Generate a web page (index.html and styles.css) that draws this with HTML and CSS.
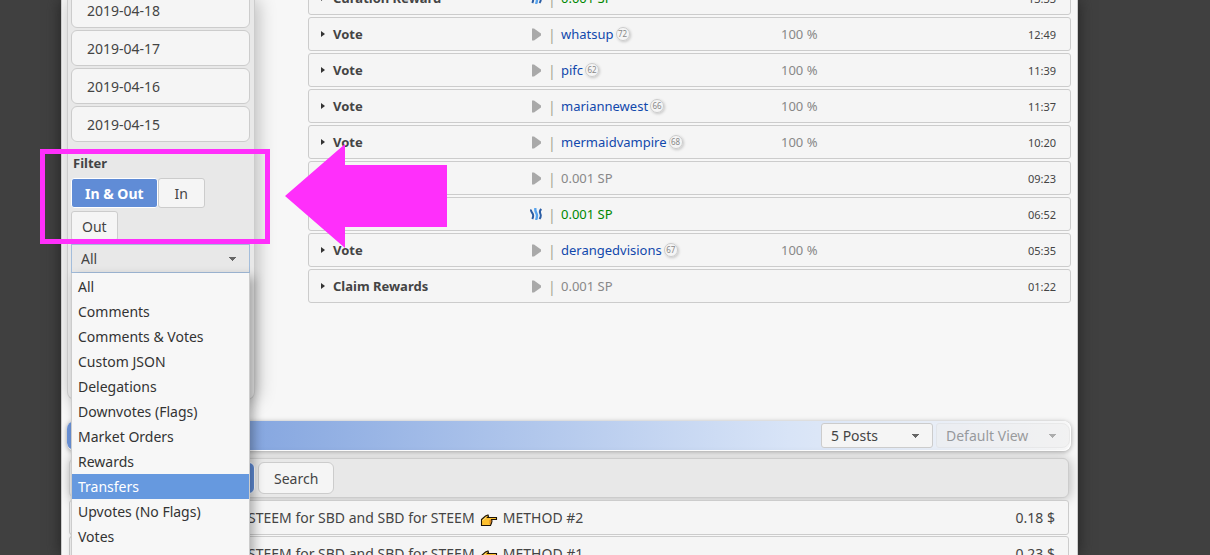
FILE: index.html
```html
<!DOCTYPE html>
<html lang="en">
<head>
    <meta charset="UTF-8">
    <meta name="viewport" content="width=device-width, initial-scale=1.0">
    <title>Account history</title>
    <link rel="stylesheet" href="styles.css">
</head>
<body>
    <svg class="symbols" aria-hidden="true">
        <symbol id="play" viewBox="0 0 10 13">
            <path d="M1 0.5h2l7 5v2l-7 5H1z" fill="#a9a9a9"/>
        </symbol>
        <symbol id="steem" viewBox="0 0 12 12">
            <path d="M1 1.5C.5 4 3.2 5 3.2 7.5 3.2 9 2.8 10 2.3 11" fill="none" stroke="#2b5da4" stroke-width="2"/>
            <path d="M5.5 0C4.500 3.5 7 5 7 7.5 7 9.5 6.5 11 6 12" fill="none" stroke="#56a3ee" stroke-width="2.4"/>
            <path d="M11.300 1C8 4 10.800 5 10.800 7.5 10.800 9 10.300 10 9.500 11" fill="none" stroke="#2b5da4" stroke-width="2"/>
        </symbol>
        <symbol id="hand" viewBox="0 0 18 13">
            <path d="M1.5 5.5 5.5 2 8 1 8.5 2.3 7.5 3.5H16.5V5.5H11.5L12 7 11.5 9 10.5 11.5H1.5z" fill="#fdc02f" stroke="#1d1408" stroke-width="1.1"/>
            <path d="M9.5 7h2M9.5 9h1.5" stroke="#a33b12" stroke-width="0.8"/>
            <path d="M2.5 6.5 6 3.5" stroke="#ffe68a"/>
        </symbol>
    </svg>

    <main class="page">
        <div class="history">
            <aside class="sidebar">
                <div class="dates">
                    <button type="button">2019-04-18</button>
                    <button type="button">2019-04-17</button>
                    <button type="button">2019-04-16</button>
                    <button type="button">2019-04-15</button>
                </div>
                <h2 class="filter-title">Filter</h2>
                <div class="directions">
                    <button type="button" class="active">In &amp; Out</button>
                    <button type="button">In</button>
                    <button type="button">Out</button>
                </div>
                <div class="type-filter">
                    <select class="type-select select" aria-label="Transaction type">
                        <option>All</option>
                    </select>
                    <ul class="type-menu" role="listbox" aria-label="Transaction types">
                        <li role="option">All</li>
                        <li role="option">Comments</li>
                        <li role="option">Comments &amp; Votes</li>
                        <li role="option">Custom JSON</li>
                        <li role="option">Delegations</li>
                        <li role="option">Downvotes (Flags)</li>
                        <li role="option">Market Orders</li>
                        <li role="option">Rewards</li>
                        <li role="option" class="selected" aria-selected="true">Transfers</li>
                        <li role="option">Upvotes (No Flags)</li>
                        <li role="option">Votes</li>
                    </ul>
                </div>
            </aside>

            <section class="transactions" id="transactions"></section>
        </div>

        <section class="posts">
            <div class="posts-header">
                <select class="select count" aria-label="Number of posts"><option>5 Posts</option></select>
                <select class="select view" aria-label="View" disabled><option>Default View</option></select>
            </div>
            <div class="toolbar">
                <button type="button" class="active" aria-label="Posts"></button>
                <button type="button">Search</button>
            </div>
            <article class="post">
                <span>STEEM for SBD and SBD for STEEM <svg class="hand"><use href="#hand"/></svg> METHOD #2</span>
                <span>0.18 $</span>
            </article>
            <article class="post">
                <span>STEEM for SBD and SBD for STEEM <svg class="hand"><use href="#hand"/></svg> METHOD #1</span>
                <span>0.23 $</span>
            </article>
        </section>
    </main>

    <!-- highlight of the filter box -->
    <div class="highlight"></div>
    <svg class="pointer" viewBox="0 0 162 104" aria-hidden="true">
        <path d="M0 52 60 0V21H162V83H60V104z" fill="#ff2ffb"/>
    </svg>

    <script src="script.js"></script>
</body>
</html>
```
FILE: script.js
```js
const transactions = [
    { type: 'Curation Reward', icon: 'steem', reward: '0.001 SP', time: '13:33' },
    { type: 'Vote', user: 'whatsup', rep: 72, weight: '100 %', time: '12:49' },
    { type: 'Vote', user: 'pifc', rep: 62, weight: '100 %', time: '11:39' },
    { type: 'Vote', user: 'mariannewest', rep: 66, weight: '100 %', time: '11:37' },
    { type: 'Vote', user: 'mermaidvampire', rep: 68, weight: '100 %', time: '10:20' },
    { type: '', amount: '0.001 SP', time: '09:23' },
    { type: '', icon: 'steem', reward: '0.001 SP', time: '06:52' },
    { type: 'Vote', user: 'derangedvisions', rep: 67, weight: '100 %', time: '05:35' },
    { type: 'Claim Rewards', amount: '0.001 SP', time: '01:22' }
];

function detail(t) {
    if (t.user) {
        return `<a href="#">${t.user}</a><span class="rep">${t.rep}</span>`;
    }
    return t.reward ? `<span class="reward">${t.reward}</span>` : t.amount;
}

document.getElementById('transactions').innerHTML = transactions.map(t => `
    <div class="transaction">
        <span class="caret"></span>
        <span class="type">${t.type}</span>
        <svg class="icon ${t.icon || 'play'}"><use href="#${t.icon || 'play'}"/></svg>
        <span class="bar">|</span>
        <span class="detail">${detail(t)}</span>
        <span class="weight">${t.weight || ''}</span>
        <time>${t.time}</time>
    </div>`).join('');
```
FILE: styles.css
```css
* {
    box-sizing: border-box;
}

body {
    height: 100vh;
    margin: 0;
    overflow: hidden;
    position: relative;
    background-color: #404040;
    color: #444;
    font-family: "Noto Sans", sans-serif;
    font-size: 14px;
}

button,
select {
    font-family: inherit;
    font-size: 14px;
    color: #444;
    border: 1px solid #ccc;
    background-color: #f5f5f5;
    cursor: pointer;
}

.symbols {
    display: none;
}

.page {
    height: 100%;
    margin: 0 132px 0 61px;
    padding: 0 6px 0 5px;
    overflow: hidden;
    background-color: #f7f7f7;
    border: 1px solid #ccc;
    border-width: 0 1px;
    box-shadow: 0 0 14px #222;
}

.history {
    display: flex;
    align-items: flex-start;
    gap: 53px;
    height: 421px;
}

/* sidebar */

.sidebar {
    flex: 0 0 188px;
    height: 400px;
    padding: 0 4px 0 3px;
    background-color: #e8e8e8;
    border: 1px solid #ccc;
    border-top: 0;
    border-radius: 0 0 8px 8px;
    box-shadow: 3px 0 18px rgba(0, 0, 0, 0.25);
}

.dates {
    display: flex;
    flex-direction: column;
    gap: 2px;
    margin-top: -8px;
}

.dates button {
    height: 36px;
    padding: 0 15px;
    border-radius: 6px;
    text-align: left;
}

.filter-title {
    margin: 11px 0 5px 2px;
    font-size: 13px;
    line-height: 20px;
}

.directions {
    display: flex;
    flex-wrap: wrap;
    gap: 3px 0;
}

.directions button {
    height: 30px;
    padding: 0 16px;
    border-radius: 3px;
}

.directions button:last-child {
    padding: 0 10px;
}

.directions .active {
    padding: 0 13px;
    background-color: #608cd6;
    border-color: #fff;
    color: #fff;
    font-weight: bold;
}

.select {
    appearance: none;
    height: 29px;
    padding: 0 9px;
    border-radius: 3px;
    background-image: linear-gradient(to bottom left, #666 50%, transparent 50%), linear-gradient(to bottom right, #666 50%, transparent 50%);
    background-size: 4px 4px;
    background-position: right 16px center, right 12px center;
    background-repeat: no-repeat;
}

.type-filter {
    position: relative;
    margin-top: 3px;
}

.type-select {
    width: 100%;
    background-color: #e8e8e8;
    border-color: #a3bddb;
    border-radius: 0;
}

.type-menu {
    position: absolute;
    top: 29px;
    left: 0;
    right: 0;
    z-index: 2;
    min-height: 300px;
    margin: 0;
    padding: 1px 0 0;
    list-style: none;
    background-color: #f7f7f7;
    border: 1px solid #ccc;
    border-width: 0 1px;
    box-shadow: 4px 4px 10px rgba(0, 0, 0, 0.3);
    color: #333;
}

.type-menu li {
    padding: 0 6px;
    line-height: 25px;
}

.type-menu .selected {
    background-color: #6699df;
    color: #fff;
}

/* transactions */

.transactions {
    flex: 1;
    margin-top: -19px;
}

.transaction {
    display: grid;
    grid-template-columns: 12px 198px 17px 13px 220px 1fr auto;
    align-items: center;
    height: 34px;
    margin-bottom: 2px;
    padding: 0 14px 0 12px;
    background-color: #f5f5f5;
    border: 1px solid #ccc;
    border-radius: 3px;
    font-size: 13px;
}

.caret {
    width: 0;
    border: 3px solid transparent;
    border-left: 4px solid #333;
    border-right: 0;
}

.type {
    font-weight: bold;
}

.icon {
    width: 10px;
    height: 13px;
}

.icon.steem {
    width: 12px;
    height: 12px;
    margin-left: -1px;
}

.bar {
    color: #a3a593;
    font-size: 14px;
}

.detail {
    display: flex;
    align-items: center;
    gap: 2px;
    color: #888;
}

.detail a {
    color: #1148ac;
    text-decoration: none;
}

.reward {
    color: #080;
}

.rep {
    width: 14px;
    height: 14px;
    border: 1px solid #ccc;
    border-radius: 50%;
    box-shadow: 1px 1px 3px rgba(0, 0, 0, 0.2);
    color: #888;
    font-size: 8px;
    line-height: 12px;
    text-align: center;
}

.weight {
    color: #888;
}

.transaction time {
    font-size: 11px;
}

/* posts */

.posts-header {
    display: flex;
    justify-content: flex-end;
    gap: 3px;
    height: 30px;
    padding: 2px 0;
    background: linear-gradient(to right, #6a92d8, #d8e4f7 72%, #f7f7f7);
    border: 1px solid #fff;
    border-width: 0 1px 1px 0;
    border-radius: 8px;
    box-shadow: 0 1px 5px rgba(0, 0, 0, 0.35);
}

.posts-header .select {
    height: 25px;
}

.count {
    width: 112px;
}

.view {
    width: 134px;
}

.view:disabled {
    border-color: #ddd;
    background-color: #eee;
    border-radius: 3px 8px 8px 3px;
    opacity: 0.5;
}

.toolbar {
    display: flex;
    gap: 3px;
    margin: 7px 2px 2px;
    padding: 3px;
    background-color: #e8e8e8;
    border: 1px solid #ccc;
    border-radius: 6px;
    box-shadow: 1px 1px 12px rgba(0, 0, 0, 0.25);
}

.toolbar button {
    height: 32px;
    padding: 0 15px;
    border-radius: 6px;
}

.toolbar .active {
    width: 182px;
    background-color: #608cd6;
    border-color: #fff;
}

.post {
    display: flex;
    align-items: center;
    justify-content: space-between;
    height: 35px;
    margin: 0 2px 1px;
    padding: 0 13px 0 178px;
    background-color: #f5f5f5;
    border: 1px solid #ccc;
    border-radius: 3px;
}

.hand {
    width: 18px;
    height: 13px;
    margin: 0 1px 0 2px;
    vertical-align: -4px;
}

/* annotations */

.highlight {
    position: absolute;
    top: 149px;
    left: 40px;
    z-index: 3;
    width: 230px;
    height: 95px;
    border: 5px solid #ff2ffb;
}

.pointer {
    position: absolute;
    top: 144px;
    left: 285px;
    z-index: 3;
    width: 162px;
    height: 104px;
}
```
